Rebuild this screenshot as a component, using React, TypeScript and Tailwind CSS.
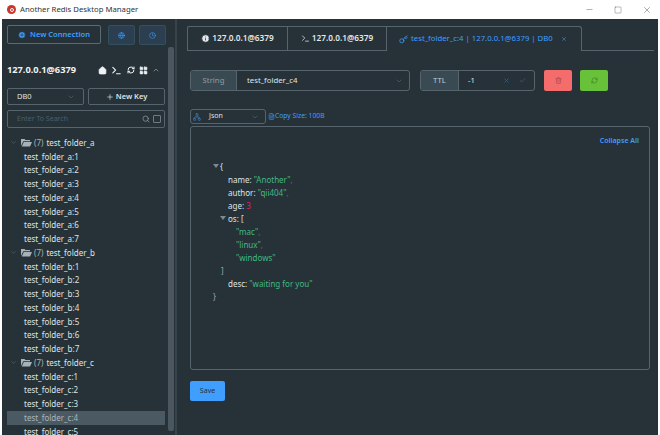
import { ChevronDown, ChevronUp, Check, X, Minus, Square, Search, Plus, Home, RefreshCw, LayoutGrid, Trash2, Key, Info, Clock, Globe, Network, FileText, CirclePlus, Terminal } from 'lucide-react';

const folders = [
    { name: 'test_folder_a', keys: ['a:1', 'a:2', 'a:3', 'a:4', 'a:5', 'a:6', 'a:7'] },
    { name: 'test_folder_b', keys: ['b:1', 'b:2', 'b:3', 'b:4', 'b:5', 'b:6', 'b:7'] },
    { name: 'test_folder_c', keys: ['c:1', 'c:2', 'c:3', 'c:4', 'c:5'] },
];

function FolderIcon() {
    return (
        <svg width="11" height="9" viewBox="0 0 11 9" className="ml-[4px] shrink-0">
            <path d="M0 8V1h3.5l1 1H9v1.2H2.3L0 8z" fill="#a7b2b7" />
            <path d="M0.8 8.5L2.8 4H11L9 8.5H0.8z" fill="#a7b2b7" />
        </svg>
    );
}

function Sidebar() {
    return (
        <aside className="w-[166px] shrink-0 h-full overflow-hidden flex flex-col">
            {/* Connection buttons */}
            <div className="flex shrink-0 pl-[5px] pt-[6px] h-[26px] box-content">
                <div className="w-[94px] h-[19px] border border-[#5b6b73] rounded-[2px] flex items-center justify-center gap-[4px] text-[#409eff] text-[7.5px] font-semibold">
                    <CirclePlus size={8} fill="#409eff" stroke="#263238" />
                    New Connection
                </div>
                <div className="ml-[7px] w-[27px] h-[20px] bg-[#2b3f50] border border-[#34505f] rounded-[2px] flex items-center justify-center text-[#409eff]">
                    <Globe size={7} />
                </div>
                <div className="ml-[4px] w-[27px] h-[20px] bg-[#2b3f50] border border-[#34505f] rounded-[2px] flex items-center justify-center text-[#409eff]">
                    <Clock size={7} />
                </div>
            </div>

            {/* Server title */}
            <div className="flex shrink-0 items-center justify-between pl-[5px] pr-[8px] mt-[11px] h-[16px]">
                <span className="text-[#f0f3f4] text-[9.25px] font-bold">127.0.0.1@6379</span>
                <div className="flex items-center gap-[4px] text-[#f0f3f4]">
                    <Home size={9} fill="#f0f3f4" />
                    <Terminal size={11} strokeWidth={2.5} />
                    <RefreshCw size={8} strokeWidth={3} className="ml-[1px]" />
                    <LayoutGrid size={9} fill="#f0f3f4" />
                    <ChevronUp size={8} className="text-[#9aa5aa]" />
                </div>
            </div>

            {/* DB select and new key */}
            <div className="flex shrink-0 pl-[5px] mt-[10px] gap-[4px]">
                <div className="w-[77px] h-[17px] border border-[#56656d] rounded-[2px] flex items-center justify-between pl-[9px] pr-[8px] text-[#dfe4e6] text-[7.5px]">
                    DB0
                    <ChevronDown size={8} className="text-[#4f6572]" />
                </div>
                <div className="w-[77px] h-[17px] border border-[#56656d] rounded-[2px] flex items-center justify-center gap-[2px] text-[#dfe4e6] text-[7.5px] font-semibold">
                    <Plus size={8} />
                    New Key
                </div>
            </div>

            {/* Search */}
            <div className="ml-[5px] mt-[5px] shrink-0 w-[158px] h-[18px] border border-[#56656d] rounded-[2px] flex items-center pl-[9px] pr-[3px] text-[#46606f] text-[7px]">
                <span className="flex-1">Enter To Search</span>
                <Search size={8} className="text-[#98a4aa]" />
                <span className="ml-[3px] w-[8px] h-[8px] border border-[#6d7b82] rounded-[1px]"></span>
            </div>

            {/* Key tree */}
            <div className="mt-[8px] ml-[5px] w-[158px] text-[8px] text-[#dfe4e6]">
                {folders.map((folder) => (
                    <div key={folder.name}>
                        <div className="h-[13.75px] flex items-center pl-[3px]">
                            <ChevronDown size={7} className="text-[#5a6b74]" />
                            <FolderIcon />
                            <span className="ml-[2px] text-[#a7b2b7]">(7)</span>
                            <span className="ml-[3px]">{folder.name}</span>
                        </div>
                        {folder.keys.map((k) => (
                            <div
                                key={k}
                                className={`h-[13.75px] flex items-center pl-[17px] ${k === 'c:4' ? 'bg-[#4b5a62] text-[#a9b4b9]' : ''}`}
                            >
                                {'test_folder_' + k}
                            </div>
                        ))}
                    </div>
                ))}
            </div>
        </aside>
    );
}

function Tabs() {
    return (
        <div className="flex items-stretch h-[25px] pl-[10px] pr-[4px] text-[8.25px] font-semibold">
            <div className="w-[100px] border border-r-0 border-[#56656d] flex items-center justify-center gap-[2px] text-[#e3e8ea] rounded-tl-[2px]">
                <Info size={9} fill="#e3e8ea" stroke="#263238" />
                127.0.0.1@6379
            </div>
            <div className="w-[100px] border border-[#56656d] flex items-center justify-center gap-[2px] text-[#e3e8ea]">
                <Terminal size={9} />
                127.0.0.1@6379
            </div>
            <div className="w-[195px] border border-l-0 border-b-0 border-[#56656d] rounded-tr-[3px] flex items-center pl-[12px] gap-[3px] text-[#409eff] font-normal text-[7.75px]">
                <Key size={9} />
                test_folder_c:4 | 127.0.0.1@6379 | DB0
                <X size={6} className="ml-[5px]" />
            </div>
            <div className="flex-1 border-b border-[#56656d]"></div>
        </div>
    );
}

function KeyRow() {
    return (
        <div className="flex items-center mt-[19px] pl-[13px] h-[21px] text-[7.75px]">
            <div className="w-[220px] h-full border border-[#56656d] rounded-[3px] flex overflow-hidden">
                <div className="w-[46px] bg-[#3a4a52] border-r border-[#56656d] flex items-center justify-center text-[#8f9da3]">String</div>
                <div className="flex-1 flex items-center justify-between pl-[10px] pr-[6px] text-[#dfe4e6]">
                    test_folder_c4
                    <ChevronDown size={8} className="text-[#4f6572]" />
                </div>
            </div>
            <div className="ml-[10px] w-[115px] h-full border border-[#56656d] rounded-[3px] flex overflow-hidden">
                <div className="w-[38px] bg-[#3a4a52] border-r border-[#56656d] flex items-center justify-center text-[#c0cacd]">TTL</div>
                <div className="flex-1 flex items-center pl-[9px] pr-[8px] text-[#dfe4e6]">
                    <span className="flex-1">-1</span>
                    <X size={7} className="text-[#3d6d94]" />
                    <Check size={7} className="text-[#5a6b74] ml-[9px]" />
                </div>
            </div>
            <div className="ml-[9px] w-[28px] h-[21px] bg-[#f56c6c] rounded-[2px] flex items-center justify-center">
                <Trash2 size={7} className="text-[#a84a4a]" />
            </div>
            <div className="ml-[8px] w-[28px] h-[21px] bg-[#67c23a] rounded-[2px] flex items-center justify-center">
                <RefreshCw size={7} className="text-[#3f7a24]" />
            </div>
        </div>
    );
}

function JsonView() {
    const str = 'text-[#42b983]';
    return (
        <div className="pl-[13px] pt-[13px] text-[8px] leading-[13px] text-[#dfe4e6]">
            <div className="flex items-center h-[13px]"><span className="w-[6px] h-0 border-x-[3px] border-x-transparent border-t-[4px] border-t-[#7d8a90] mr-[1px]"></span>{'{'}</div>
            <div className="pl-[15px]">name: <span className={str}>"Another"</span><span className="text-[#5a6b74]">,</span></div>
            <div className="pl-[15px]">author: <span className={str}>"qii404"</span><span className="text-[#5a6b74]">,</span></div>
            <div className="pl-[15px]">age: <span className="text-[#e0245e]">3</span></div>
            <div className="pl-[7px] flex items-center h-[13px]"><span className="w-[6px] h-0 border-x-[3px] border-x-transparent border-t-[4px] border-t-[#7d8a90] mr-[2px]"></span>os: [</div>
            <div className={`pl-[23px] ${str}`}>"mac"<span className="text-[#5a6b74]">,</span></div>
            <div className={`pl-[23px] ${str}`}>"linux"<span className="text-[#5a6b74]">,</span></div>
            <div className={`pl-[23px] ${str}`}>"windows"</div>
            <div className="pl-[8px] text-[#9aa5aa]">]</div>
            <div className="pl-[15px]">desc: <span className={str}>"waiting for you"</span></div>
            <div className="text-[#9aa5aa]">{'}'}</div>
        </div>
    );
}

function Editor() {
    return (
        <div className="pl-[13px] flex flex-col">
            <div className="flex items-center mt-[18px] h-[15px]">
                <div className="w-[76px] h-[15px] border border-[#56656d] rounded-[3px] flex items-center pl-[2px] pr-[6px] text-[#dfe4e6] text-[7px]">
                    <Network size={8} className="text-[#3f7fb5]" />
                    <span className="ml-[8px] flex-1">Json</span>
                    <ChevronDown size={8} className="text-[#4f6572]" />
                </div>
                <FileText size={7} className="ml-[2px] text-[#409eff]" />
                <span className="text-[#409eff] text-[6.75px]">Copy Size: 100B</span>
            </div>
            <div className="mt-[2px] w-[460px] h-[244px] border border-[#56656d] rounded-[3px] pt-[9px] pl-[9px] pr-[10px] flex flex-col">
                <div className="text-right text-[#409eff] text-[7px] font-semibold">Collapse All</div>
                <JsonView />
            </div>
            <div className="mt-[11px] w-[35px] h-[20px] bg-[#409eff] rounded-[2px] flex items-center justify-center text-[#263238] text-[7px]">Save</div>
        </div>
    );
}

export default function App() {
    return (
        <div className="w-[660px] h-[435px] bg-white overflow-hidden flex flex-col" style={{ fontFamily: '"Noto Sans", "Open Sans", sans-serif' }}>
            {/* Window title bar */}
            <div className="h-[19px] shrink-0 flex items-center pl-[7px] text-[#333] text-[7.75px]">
                <span className="w-[9px] h-[9px] rounded-full bg-[#c8372d] mr-[4px] flex items-center justify-center">
                    <span className="w-[4px] h-[4px] rounded-full border border-white"></span>
                </span>
                <span className="flex-1">Another Redis Desktop Manager</span>
                <Minus size={9} strokeWidth={1} />
                <Square size={8} strokeWidth={1} className="ml-[20px]" />
                <X size={10} strokeWidth={1} className="ml-[20px] mr-[8px]" />
            </div>
            <div className="flex-1 min-h-0 ml-[2px] mr-[2px] bg-[#263238] flex overflow-hidden">
                <Sidebar />
                {/* Sidebar scrollbar */}
                <div className="w-[6px] shrink-0 h-full pt-[28px] pb-[4px]">
                    <div className="w-[6px] h-full bg-[#4a575e] rounded-[2px]"></div>
                </div>
                {/* Resize divider */}
                <div className="w-[2px] shrink-0 h-full bg-[#37444b] ml-[1px] flex items-center">
                    <div className="w-[2px] h-[12px] bg-[#7d8a90] ml-[4px]"></div>
                </div>
                <main className="flex-1 min-w-0 pt-[7px]">
                    <Tabs />
                    <KeyRow />
                    <Editor />
                </main>
            </div>
        </div>
    );
}
